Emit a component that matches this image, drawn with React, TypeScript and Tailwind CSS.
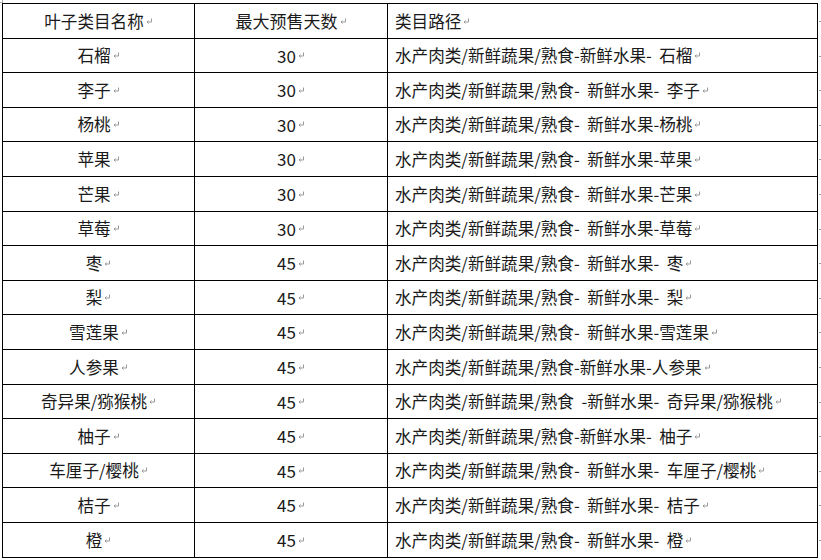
import React from "react";

const rows = [
  { name: "石榴", days: "30", path: "水产肉类/新鲜蔬果/熟食-新鲜水果-  石榴" },
  { name: "李子", days: "30", path: "水产肉类/新鲜蔬果/熟食-  新鲜水果-  李子" },
  { name: "杨桃", days: "30", path: "水产肉类/新鲜蔬果/熟食-  新鲜水果-杨桃" },
  { name: "苹果", days: "30", path: "水产肉类/新鲜蔬果/熟食-  新鲜水果-苹果" },
  { name: "芒果", days: "30", path: "水产肉类/新鲜蔬果/熟食-  新鲜水果-芒果" },
  { name: "草莓", days: "30", path: "水产肉类/新鲜蔬果/熟食-  新鲜水果-草莓" },
  { name: "枣", days: "45", path: "水产肉类/新鲜蔬果/熟食-  新鲜水果-  枣" },
  { name: "梨", days: "45", path: "水产肉类/新鲜蔬果/熟食-  新鲜水果-  梨" },
  { name: "雪莲果", days: "45", path: "水产肉类/新鲜蔬果/熟食-  新鲜水果-雪莲果" },
  { name: "人参果", days: "45", path: "水产肉类/新鲜蔬果/熟食-新鲜水果-人参果" },
  { name: "奇异果/猕猴桃", days: "45", path: "水产肉类/新鲜蔬果/熟食  -新鲜水果-  奇异果/猕猴桃" },
  { name: "柚子", days: "45", path: "水产肉类/新鲜蔬果/熟食-新鲜水果-  柚子" },
  { name: "车厘子/樱桃", days: "45", path: "水产肉类/新鲜蔬果/熟食-  新鲜水果-  车厘子/樱桃" },
  { name: "桔子", days: "45", path: "水产肉类/新鲜蔬果/熟食-  新鲜水果-  桔子" },
  { name: "橙", days: "45", path: "水产肉类/新鲜蔬果/熟食-  新鲜水果-  橙" },
];

// row heights follow the rendered line positions (35/34 alternating)
const heights = [
  "h-[34px]", "h-[35px]", "h-[34px]", "h-[35px]", "h-[35px]",
  "h-[34px]", "h-[35px]", "h-[34px]", "h-[35px]", "h-[35px]",
  "h-[34px]", "h-[35px]", "h-[34px]", "h-[35px]", "h-[35px]",
];

function Ret() {
  return (
    <svg width="8" height="8" viewBox="0 0 8 8" className="inline-block ml-[1px] mb-[1px]">
      <path d="M6.5 1.5 V5 H2" fill="none" stroke="#9a9a9a" strokeWidth="1" />
      <path d="M3.5 3.5 L2 5 L3.5 6.5" fill="none" stroke="#9a9a9a" strokeWidth="1" />
    </svg>
  );
}

function Row({ a, b, c, h }: { a: string; b: string; c: string; h: string }) {
  return (
    <div className={`flex border-b border-black ${h} relative`}>
      <div className="w-[192px] border-r border-black flex items-center justify-center">
        <span>{a}</span>
        <Ret />
      </div>
      <div className="w-[193px] border-r border-black flex items-center justify-center">
        <span className="text-[17px]">{b}</span>
        <Ret />
      </div>
      <div className="w-[429px] flex items-center pl-[7px]">
        <span className="whitespace-pre">{c}</span>
        <Ret />
      </div>
      <div className="absolute right-[-4px] top-1/2 w-[2px] h-[1px] bg-[#9a9a9a]" />
    </div>
  );
}

export default function App() {
  return (
    <div
      className="w-[821px] h-[560px] bg-white text-[#1a1a1a] text-[16.6px] relative overflow-hidden"
      style={{ fontFamily: '"Noto Sans CJK SC", "Noto Sans", sans-serif' }}
    >
      <div className="absolute left-0 top-0 w-[3px] h-[3px] border-r border-b border-[#b0b0b0]" />
      <div className="ml-[2px] mt-[3px] w-[816px] border-t border-l border-r border-black">
        <Row a="叶子类目名称" b="最大预售天数" c="类目路径" h="h-[35px]" />
        {rows.map((r, i) => (
          <Row key={r.name} a={r.name} b={r.days} c={r.path} h={heights[i]} />
        ))}
      </div>
    </div>
  );
}
